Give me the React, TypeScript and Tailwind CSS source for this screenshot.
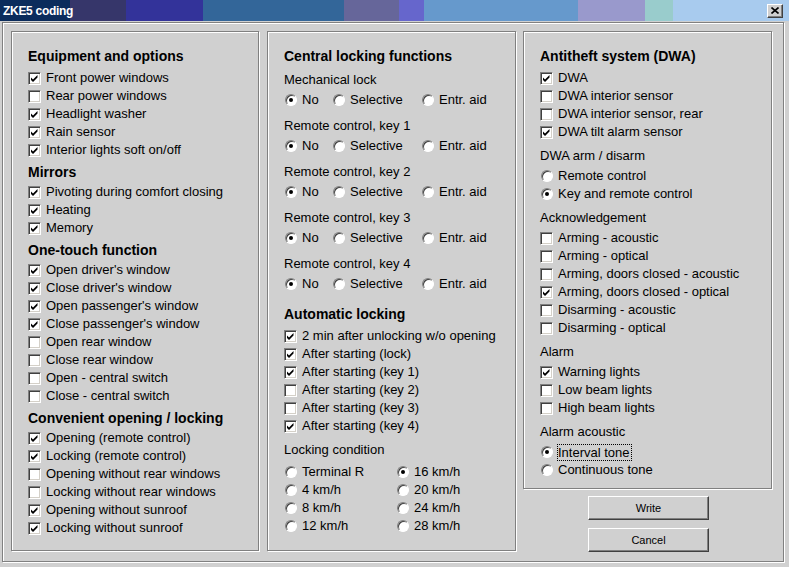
import React from 'react';

const font = "font-['Liberation_Sans',Arial,sans-serif]";

const Check: React.FC<{ checked?: boolean }> = ({ checked }) => (
  <span className="relative inline-block w-[13px] h-[13px] shrink-0 bg-white border border-t-[#808080] border-l-[#808080] border-b-white border-r-white shadow-[inset_1px_1px_0_#404040,inset_-1px_-1px_0_#d4d0c8]">
    {checked && (
      <svg className="absolute left-[1px] top-[1px]" width="9" height="9" viewBox="0 0 9 9">
        <path d="M1 3.5 L3 5.5 L7.5 1 L7.5 3.5 L3 8 L1 6 Z" fill="#000" />
      </svg>
    )}
  </span>
);

const Radio: React.FC<{ checked?: boolean }> = ({ checked }) => (
  <span className="inline-flex w-[12px] h-[12px] shrink-0 items-center justify-center rounded-full bg-white border border-t-[#808080] border-l-[#808080] border-b-white border-r-white shadow-[inset_1px_1px_0_#404040]">
    {checked && <span className="w-[4px] h-[4px] rounded-full bg-black" />}
  </span>
);

const CheckItem: React.FC<{ label: string; checked?: boolean }> = ({ label, checked }) => (
  <div className="flex items-center h-[18px] gap-[5px] whitespace-nowrap">
    <Check checked={checked} />
    <span>{label}</span>
  </div>
);

const RadioItem: React.FC<{ label: string; checked?: boolean; focus?: boolean; className?: string }> = ({
  label,
  checked,
  focus,
  className = '',
}) => (
  <div className={`flex items-center h-[18px] whitespace-nowrap ${focus ? 'gap-[4px]' : 'gap-[5px]'} ${className}`}>
    <Radio checked={checked} />
    {focus ? (
      <span className="border border-dotted border-black leading-[15px] pr-[1px]">{label}</span>
    ) : (
      <span>{label}</span>
    )}
  </div>
);

const Heading: React.FC<{ children: React.ReactNode; className?: string }> = ({ children, className = '' }) => (
  <div className={`h-[20px] leading-[20px] text-[14px] font-bold whitespace-nowrap ${className}`}>{children}</div>
);

const SubLabel: React.FC<{ children: React.ReactNode }> = ({ children }) => (
  <div className="mt-[5px] h-[21px] leading-[20px] whitespace-nowrap">{children}</div>
);

const Panel: React.FC<{ children: React.ReactNode; className?: string }> = ({ children, className = '' }) => (
  <div
    className={`border border-[#808080] shadow-[inset_1px_1px_0_#fff,1px_1px_0_#fff] pt-[14px] px-[16px] ${className}`}
  >
    {children}
  </div>
);

const RemoteGroup: React.FC<{ label: string; first?: boolean }> = ({ label, first }) => (
  <div className={first ? 'mt-[4px]' : 'mt-[6px]'}>
    <div className="h-[20px] leading-[20px]">{label}</div>
    <div className="flex items-center h-[20px] pl-[1px]">
      <RadioItem label="No" checked className="w-[48px]" />
      <RadioItem label="Selective" className="w-[89px]" />
      <RadioItem label="Entr. aid" />
    </div>
  </div>
);

const Button: React.FC<{ label: string; className?: string }> = ({ label, className = '' }) => (
  <button
    className={`w-[121px] h-[24px] text-[11px] bg-[#d0d0d0] border border-t-white border-l-white border-b-[#404040] border-r-[#404040] shadow-[inset_-1px_-1px_0_#808080] ${className}`}
  >
    {label}
  </button>
);

export default function App() {
  return (
    <div className={`w-[789px] h-[567px] bg-[#d0d0d0] text-black text-[13px] flex flex-col ${font}`}>
      {/* Title bar */}
      <div className="h-[21px] shrink-0 flex items-center justify-between bg-[linear-gradient(to_right,#0b2c5c_0px,#0b2c5c_70px,#36366a_70px,#36366a_126px,#33339a_126px,#33339a_203px,#336699_203px,#336699_344px,#66669a_344px,#66669a_399px,#6666cc_399px,#6666cc_424px,#6699cc_424px,#6699cc_578px,#9999cc_578px,#9999cc_645px,#99cccc_645px,#99cccc_673px,#a8cbee_673px,#a8cbee_789px)]">
        <span className="pl-[3px] text-white font-bold text-[12px] tracking-[-0.3px]">ZKE5 coding</span>
        <span className="mr-[6px] w-[16px] h-[14px] flex items-center justify-center bg-[#d0d0d0] border border-t-white border-l-white border-b-[#404040] border-r-[#404040] shadow-[inset_-1px_-1px_0_#808080]">
          <svg width="8" height="7" viewBox="0 0 8 7">
            <path d="M0.5 0.5 L7.5 6.5 M7.5 0.5 L0.5 6.5" stroke="#000" strokeWidth="1.6" />
          </svg>
        </span>
      </div>

      {/* Frame */}
      <div className="mt-[1px] ml-[2px] mr-[5px] h-[540px] border border-[#808080] shadow-[inset_1px_1px_0_#fff,1px_1px_0_#fff] pl-[8px] pt-[8px] flex items-start">
        {/* Left panel */}
        <Panel className="w-[248px] h-[520px]">
          <Heading className="mb-[3px]">Equipment and options</Heading>
          <CheckItem label="Front power windows" checked />
          <CheckItem label="Rear power windows" />
          <CheckItem label="Headlight washer" checked />
          <CheckItem label="Rain sensor" checked />
          <CheckItem label="Interior lights soft on/off" checked />
          <Heading className="mt-[3px] mb-[1px]">Mirrors</Heading>
          <CheckItem label="Pivoting during comfort closing" checked />
          <CheckItem label="Heating" checked />
          <CheckItem label="Memory" checked />
          <Heading className="mt-[3px] mb-[1px]">One-touch function</Heading>
          <CheckItem label="Open driver's window" checked />
          <CheckItem label="Close driver's window" checked />
          <CheckItem label="Open passenger's window" checked />
          <CheckItem label="Close passenger's window" checked />
          <CheckItem label="Open rear window" />
          <CheckItem label="Close rear window" />
          <CheckItem label="Open - central switch" />
          <CheckItem label="Close - central switch" />
          <Heading className="mt-[3px] mb-[1px]">Convenient opening / locking</Heading>
          <CheckItem label="Opening (remote control)" checked />
          <CheckItem label="Locking (remote control)" checked />
          <CheckItem label="Opening without rear windows" />
          <CheckItem label="Locking without rear windows" />
          <CheckItem label="Opening without sunroof" checked />
          <CheckItem label="Locking without sunroof" checked />
        </Panel>

        {/* Middle panel */}
        <Panel className="ml-[8px] w-[249px] h-[520px]">
          <Heading>Central locking functions</Heading>
          <RemoteGroup label="Mechanical lock" first />
          <RemoteGroup label="Remote control, key 1" />
          <RemoteGroup label="Remote control, key 2" />
          <RemoteGroup label="Remote control, key 3" />
          <RemoteGroup label="Remote control, key 4" />
          <Heading className="mt-[10px] mb-[3px]">Automatic locking</Heading>
          <CheckItem label="2 min after unlocking w/o opening" checked />
          <CheckItem label="After starting (lock)" checked />
          <CheckItem label="After starting (key 1)" checked />
          <CheckItem label="After starting (key 2)" />
          <CheckItem label="After starting (key 3)" />
          <CheckItem label="After starting (key 4)" checked />
          <div className="mt-[5px] h-[20px] leading-[20px]">Locking condition</div>
          <div className="mt-[3px] pl-[1px] grid grid-cols-[112px_1fr]">
            <RadioItem label="Terminal R" />
            <RadioItem label="16 km/h" checked />
            <RadioItem label="4 km/h" />
            <RadioItem label="20 km/h" />
            <RadioItem label="8 km/h" />
            <RadioItem label="24 km/h" />
            <RadioItem label="12 km/h" />
            <RadioItem label="28 km/h" />
          </div>
        </Panel>

        {/* Right column */}
        <div className="ml-[7px] w-[249px] flex flex-col">
          <Panel className="h-[458px]">
            <Heading className="mb-[3px]">Antitheft system (DWA)</Heading>
            <CheckItem label="DWA" checked />
            <CheckItem label="DWA interior sensor" />
            <CheckItem label="DWA interior sensor, rear" />
            <CheckItem label="DWA tilt alarm sensor" checked />
            <SubLabel>DWA arm / disarm</SubLabel>
            <RadioItem label="Remote control" className="pl-[1px]" />
            <RadioItem label="Key and remote control" checked className="pl-[1px]" />
            <SubLabel>Acknowledgement</SubLabel>
            <CheckItem label="Arming - acoustic" />
            <CheckItem label="Arming - optical" />
            <CheckItem label="Arming, doors closed - acoustic" />
            <CheckItem label="Arming, doors closed - optical" checked />
            <CheckItem label="Disarming - acoustic" />
            <CheckItem label="Disarming - optical" />
            <SubLabel>Alarm</SubLabel>
            <CheckItem label="Warning lights" checked />
            <CheckItem label="Low beam lights" />
            <CheckItem label="High beam lights" />
            <SubLabel>Alarm acoustic</SubLabel>
            <RadioItem label="Interval tone" checked focus className="pl-[1px]" />
            <RadioItem label="Continuous tone" className="pl-[1px]" />
          </Panel>
          <Button label="Write" className="mt-[7px] ml-[65px]" />
          <Button label="Cancel" className="mt-[8px] ml-[65px]" />
        </div>
      </div>
    </div>
  );
}
